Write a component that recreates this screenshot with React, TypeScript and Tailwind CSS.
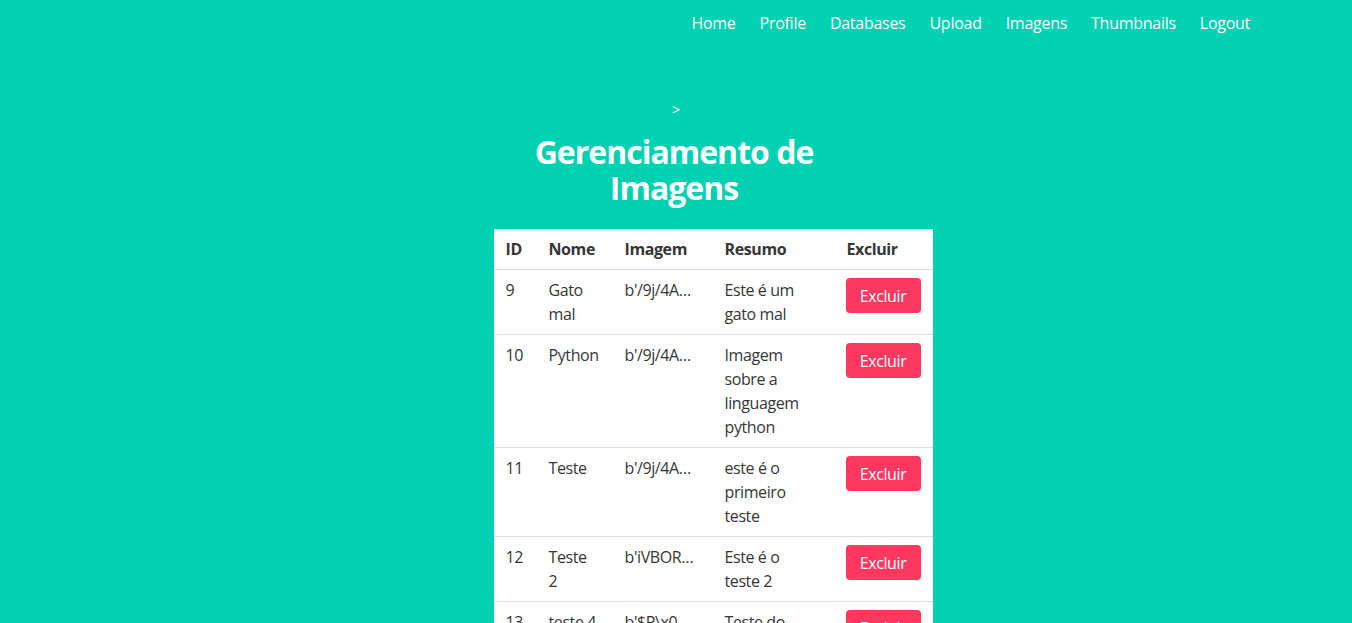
import React from 'react';

type Row = {
  id: number;
  nome: string[];
  imagem: string;
  resumo: string[];
};

const rows: Row[] = [
  { id: 9, nome: ['Gato', 'mal'], imagem: "b'/9j/4A…", resumo: ['Este é um', 'gato mal'] },
  { id: 10, nome: ['Python'], imagem: "b'/9j/4A…", resumo: ['Imagem', 'sobre a', 'linguagem', 'python'] },
  { id: 11, nome: ['Teste'], imagem: "b'/9j/4A…", resumo: ['este é o', 'primeiro', 'teste'] },
  { id: 12, nome: ['Teste', '2'], imagem: "b'iVBOR…", resumo: ['Este é o', 'teste 2'] },
  { id: 13, nome: ['teste 4'], imagem: "b'$P\\x0…", resumo: ['Teste do', 'teste 4'] },
];

const links = ['Home', 'Profile', 'Databases', 'Upload', 'Imagens', 'Thumbnails', 'Logout'];

const Lines: React.FC<{ lines: string[] }> = ({ lines }) => (
  <>
    {lines.map((l, i) => (
      <span key={i} className="block whitespace-nowrap">
        {l}
      </span>
    ))}
  </>
);

const App: React.FC = () => {
  return (
    <div
      className="min-h-screen bg-[#00d1b2] text-[16px] leading-6 text-[#363636]"
      style={{ fontFamily: '"Open Sans", "Noto Sans", sans-serif' }}
    >
      {/* navbar */}
      <nav className="flex justify-end pr-[90px] pt-[11px]">
        {links.map((l) => (
          <a key={l} href="#" className="px-3 text-white tracking-[-0.27px]">
            {l}
          </a>
        ))}
      </nav>

      <section className="flex flex-col items-center pt-[62px] pb-16">
        <p className="text-white text-[14px] pt-px">&gt;</p>
        <h1 className="mt-[12px] mb-[23px] mr-[4px] text-center text-[32px] leading-9 font-bold text-white tracking-[-1px]">
          Gerenciamento de
          <br />
          Imagens
        </h1>

        <table className="ml-[74px] bg-white border-collapse table-fixed w-[439px] tracking-[-0.4px]">
          <colgroup>
            <col className="w-[43px]" />
            <col className="w-[76px]" />
            <col className="w-[100px]" />
            <col className="w-[122px]" />
            <col className="w-[98px]" />
          </colgroup>
          <thead>
            <tr className="border-b border-[#dbdbdb] text-left">
              <th className="px-3 py-2 font-bold">ID</th>
              <th className="px-3 py-2 font-bold">Nome</th>
              <th className="px-3 py-2 font-bold">Imagem</th>
              <th className="px-3 py-2 font-bold">Resumo</th>
              <th className="px-3 py-2 font-bold">Excluir</th>
            </tr>
          </thead>
          <tbody>
            {rows.map((r) => (
              <tr key={r.id} className="border-b border-[#dbdbdb] align-top">
                <td className="px-3 py-2">{r.id}</td>
                <td className="px-3 py-2">
                  <Lines lines={r.nome} />
                </td>
                <td className="px-3 py-2 whitespace-nowrap">{r.imagem}</td>
                <td className="px-3 py-2">
                  <Lines lines={r.resumo} />
                </td>
                <td className="pl-[11px] pr-3 py-2">
                  <button className="h-[35px] w-[75px] rounded-[4px] bg-[#ff3860] text-white">
                    Excluir
                  </button>
                </td>
              </tr>
            ))}
          </tbody>
        </table>
      </section>
    </div>
  );
};

export default App;
